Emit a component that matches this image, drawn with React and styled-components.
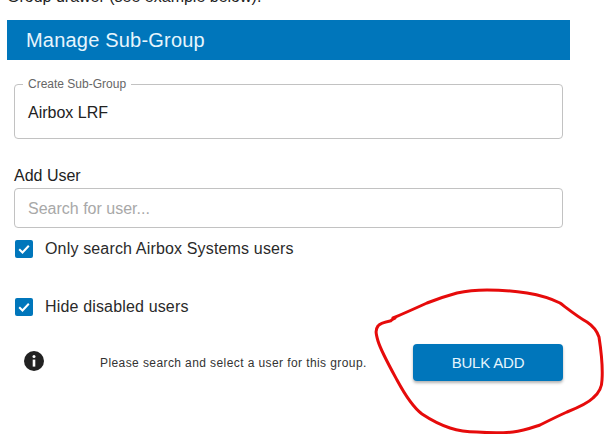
import React from "react";
import styled, { createGlobalStyle } from "styled-components";

const Global = createGlobalStyle`
  html, body { margin: 0; padding: 0; background: #fff; }
  body { font-family: "Liberation Sans", Arial, sans-serif; color: #222; }
`;
const Page = styled.div`
  position: relative;
  width: 604px;
  height: 434px;
  overflow: hidden;
  background: #fff;
`;
const Intro = styled.div`
  height: 20px;
  padding-left: 7px;
  display: flex;
  align-items: flex-end;
  overflow: hidden;
  font-size: 16px;
  line-height: 18px;
  color: #222;
  transform: translateY(-14px);
`;
const Header = styled.h2`
  margin: 0 34px 0 7px;
  height: 40px;
  padding-left: 19px;
  display: flex;
  align-items: center;
  background: #0076bb;
  color: #e6f5fd;
  font-size: 20px;
  font-weight: 400;
  letter-spacing: 0.2px;
`;
const Body = styled.div`
  padding: 18px 41px 0 14px;
  display: flex;
  flex-direction: column;
`;
const Outlined = styled.fieldset`
  margin: 0;
  padding: 0 13px;
  height: 61px;
  box-sizing: border-box;
  border: 1px solid #c2c2c2;
  border-radius: 4px;
  min-width: 0;
  font-size: 16px;
  line-height: 18px;
  color: #222;
`;
const Legend = styled.legend`
  margin-left: -5px;
  padding: 0 5px;
  font-size: 12px;
  line-height: 12px;
  color: #666;
`;
const FieldValue = styled.div`
  padding-top: 14px;
`;
const FieldLabel = styled.div`
  margin-top: 28px;
  font-size: 16px;
  line-height: 18px;
  color: #222;
`;
const SearchBox = styled.div`
  margin-top: 3px;
  height: 40px;
  box-sizing: border-box;
  padding: 2px 13px 0;
  display: flex;
  align-items: center;
  border: 1px solid #c2c2c2;
  border-radius: 4px;
  font-size: 16px;
  color: #a8a8a8;
`;
const CheckRow = styled.div`
  margin-top: ${(p) => p.$top}px;
  height: 18px;
  display: flex;
  align-items: center;
  gap: 12px;
  padding-left: 1px;
  font-size: 16px;
  letter-spacing: 0.16px;
  color: #2a2a2a;
`;
const CheckBox = styled.span`
  width: 18px;
  height: 18px;
  border-radius: 2px;
  background: #0076bb;
  display: flex;
  align-items: center;
  justify-content: center;
`;
const Footer = styled.div`
  margin-top: 28px;
  height: 37px;
  display: flex;
  align-items: center;
`;
const InfoIcon = styled.svg`
  width: 20px;
  height: 20px;
  margin-left: 10px;
  flex: none;
  transform: translateY(-2px);
`;
const Hint = styled.div`
  margin-left: 56px;
  width: 313px;
  font-size: 12px;
  letter-spacing: 0.41px;
  color: #333;
  white-space: nowrap;
`;
const BulkButton = styled.button`
  width: 150px;
  height: 37px;
  padding: 0;
  border: 0;
  border-radius: 4px;
  background: #0076bb;
  color: #e6f5fd;
  font-family: inherit;
  font-size: 15px;
  letter-spacing: -0.2px;
  box-shadow: 0 2px 3px rgba(0, 0, 0, 0.3);
`;
const Ink = styled.svg`
  position: absolute;
  inset: 0;
  pointer-events: none;
`;

const Tick = () => (
  <svg width="14" height="14" viewBox="0 0 14 14" fill="none">
    <path d="M2.2 7.2 5.5 10.5 11.8 3.8" stroke="#fff" strokeWidth="2" />
  </svg>
);

export default function App() {
  return (
    <Page>
      <Global />
      <Intro>Group drawer (see example below).</Intro>
      <Header>Manage Sub-Group</Header>
      <Body>
        <Outlined>
          <Legend>Create Sub-Group</Legend>
          <FieldValue>Airbox LRF</FieldValue>
        </Outlined>
        <FieldLabel>Add User</FieldLabel>
        <SearchBox>Search for user...</SearchBox>
        <CheckRow $top={12}>
          <CheckBox><Tick /></CheckBox>
          Only search Airbox Systems users
        </CheckRow>
        <CheckRow $top={40}>
          <CheckBox><Tick /></CheckBox>
          Hide disabled users
        </CheckRow>
        <Footer>
          <InfoIcon viewBox="0 0 20 20">
            <circle cx="10" cy="10" r="10" fill="#222" />
            <circle cx="10" cy="5.6" r="1.5" fill="#fff" />
            <rect x="8.7" y="8.6" width="2.6" height="7" fill="#fff" />
          </InfoIcon>
          <Hint>Please search and select a user for this group.</Hint>
          <BulkButton>BULK ADD</BulkButton>
        </Footer>
      </Body>
      <Ink width="604" height="434" viewBox="0 0 604 434" fill="none">
        <path
          d="M395 318 C390 320 392 321 390 321 C385 322 380 323 378 326 C375 330 376 334 378 341 C381 351 391 369 397 380 C404 393 414 408 422 414 C431 420 441 425 450 428 C459 431 468 432 477 432 C490 433 503 433 513 432 C523 431 531 428 540 425 C550 420 558 416 567 412 C577 408 587 404 593 398 C599 393 602 387 602 380 C603 366 601 350 599 337 C597 331 593 326 587 322 C578 317 568 309 560 303 C550 298 539 295 527 293 C514 291 500 290 487 290 C476 290 466 291 457 293 C446 296 437 299 427 303 C416 308 405 313 393 318"
          stroke="#e60b0b"
          strokeWidth="3"
          strokeLinecap="round"
          strokeLinejoin="round"
        />
      </Ink>
    </Page>
  );
}
